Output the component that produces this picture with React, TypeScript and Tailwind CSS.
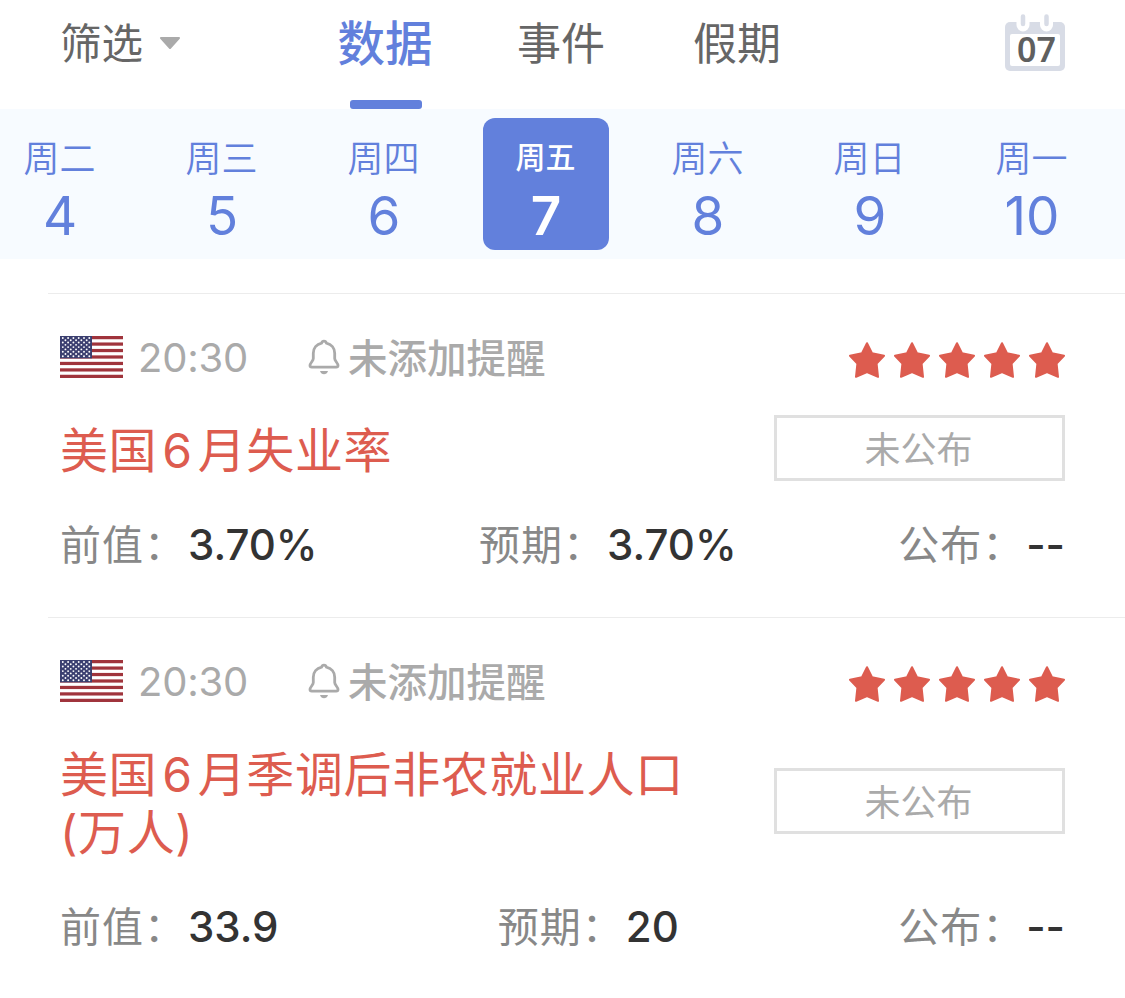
import { clsx } from "clsx";

interface Day {
  week: string;
  date: number;
}

interface Indicator {
  id: string;
  time: string;
  title: string;
  previous: string;
  forecast: string;
  actual: string;
}

const tabs = ["数据", "事件", "假期"];

const days: Day[] = [
  { week: "周二", date: 4 },
  { week: "周三", date: 5 },
  { week: "周四", date: 6 },
  { week: "周五", date: 7 },
  { week: "周六", date: 8 },
  { week: "周日", date: 9 },
  { week: "周一", date: 10 },
];

const indicators: Indicator[] = [
  {
    id: "unemployment",
    time: "20:30",
    title: "美国 6 月失业率",
    previous: "3.70%",
    forecast: "3.70%",
    actual: "--",
  },
  {
    id: "nonfarm",
    time: "20:30",
    title: "美国 6 月季调后非农就业人口(万人)",
    previous: "33.9",
    forecast: "20",
    actual: "--",
  },
];

const CalendarIcon = () => (
  <svg className="h-[58px] w-[60px]" viewBox="0 0 60 58">
    <rect y="8" width="60" height="49" rx="5" fill="#d8dce6" />
    <rect x="5" y="20" width="50" height="32" rx="2" fill="#fff" />
    <path d="M18 4V11M41.500 4V11" stroke="#fff" strokeWidth="13" strokeLinecap="round" />
    <path d="M18 2.500V10M41.500 2.500V10" stroke="#d8dce6" strokeWidth="4.500" strokeLinecap="round" />
    <text
      x="31.500"
      y="48"
      textAnchor="middle"
      className="font-['Noto_Sans','Noto_Sans_CJK_SC',sans-serif] text-[34px] font-semibold"
      fill="#5f5f5f"
    >
      07
    </text>
  </svg>
);

const FlagUS = () => (
  <svg className="h-[42px] w-[63px]" viewBox="0 0 63 42">
    <rect width="63" height="42" fill="#fff" />
    {[0, 1, 2, 3, 4, 5, 6].map((i) => (
      <rect key={i} y={i * 6.46} width="63" height="3.23" fill="#a0343c" />
    ))}
    <rect width="32" height="22.300" fill="#3b3f70" />
    {[0, 1, 2, 3, 4, 5, 6, 7, 8].map((row) =>
      Array.from({ length: row % 2 ? 5 : 6 }, (_, col) => (
        <circle
          key={`${row}-${col}`}
          cx={2.800 + col * 5.300 + (row % 2 ? 2.650 : 0)}
          cy={2 + row * 2.280}
          r="0.950"
          fill="#fff"
        />
      ))
    )}
  </svg>
);

const BellIcon = () => (
  <svg className="h-[36px] w-[32px]" viewBox="0 0 32 36" fill="none">
    <path
      d="M16 2.200C14.800 2.200 13.900 3 13.600 4.100C8.600 5.200 5.300 9.100 5.300 14.200V19.500C5.300 22 2 24 2 26.500C2 27.700 2.700 28.100 3.800 28.100H28.200C29.300 28.100 30 27.700 30 26.500C30 24 26.700 22 26.700 19.500V14.200C26.700 9.100 23.400 5.200 18.400 4.100C18.100 3 17.200 2.200 16 2.200Z"
      stroke="#aaa"
      strokeWidth="2.800"
      strokeLinejoin="round"
    />
    <path d="M12 32H20C19.300 34.200 17.800 35.300 16 35.300C14.200 35.300 12.700 34.200 12 32Z" fill="#aaa" />
  </svg>
);

const StarIcon = () => (
  <svg className="size-9" viewBox="0 0 36 36">
    <path
      d="M18 1.200L23 11.300L35 13.800L27.600 21.500L29 34.800L18 30L7 34.800L8.400 21.500L1 13.800L13 11.300Z"
      fill="#dd5c4f"
      stroke="#dd5c4f"
      strokeWidth="2"
      strokeLinejoin="round"
    />
  </svg>
);

const Header = () => (
  <header className="flex h-[109px] items-start pl-[60px] pr-[60px]">
    <button className="flex h-[86px] w-[277px] items-center text-[41.500px] text-[#666]">
      <span className="pt-[3px]">筛选</span>
      <svg className="ml-4 h-3 w-[22px]" viewBox="0 0 22 12">
        <path d="M2 1H20L11 11Z" fill="#aaa" stroke="#aaa" strokeWidth="2" strokeLinejoin="round" />
      </svg>
    </button>
    <nav className="flex flex-1">
      {tabs.map((tab, index) => (
        <button
          key={tab}
          className={clsx(
            "flex h-[109px] flex-col items-center",
            index === 0 ? "w-24 text-[47.500px] font-medium text-[#6280dc]" : "text-[44px] text-[#666]",
            index === 1 && "ml-[84px]",
            index === 2 && "ml-[88px]"
          )}
        >
          <span className="h-[88px] leading-[88px]">{tab}</span>
          {index === 0 && <span className="ml-0.5 mt-3 h-[9px] w-[72px] rounded-[3px] bg-[#6280dc]" />}
        </button>
      ))}
    </nav>
    <div className="pt-[14px]">
      <CalendarIcon />
    </div>
  </header>
);

const WeekStrip = () => (
  <div className="h-[150px] overflow-hidden bg-[#f7fbff] pt-[9px]">
    <div className="-ml-[21px] flex w-[1134px]">
      {days.map(({ week, date }) => {
        const active = date === 7;
        return (
          <div key={date} className="flex w-[162px] justify-center">
            <div
              className={clsx(
                "flex h-[132px] w-[126px] flex-col items-center rounded-xl",
                active ? "bg-[#6280dc] font-medium text-white" : "text-[#6280dc]"
              )}
            >
              <span
                className={clsx(
                  "h-[80px] pr-px",
                  active ? "text-[30px] leading-[78px]" : "text-[36px] font-[350] leading-[82px]"
                )}
              >
                {week}
              </span>
              <span className={clsx("-mt-[9px] text-[53px] leading-[54px]", active && "font-semibold")}>{date}</span>
            </div>
          </div>
        );
      })}
    </div>
  </div>
);

const Field = ({ label, value }: { label: string; value: string }) => (
  <div className="flex items-center whitespace-nowrap">
    <span className="pt-[4px] text-[41px] tracking-[1px] text-[#888]">{label}：</span>
    <span className="ml-0.5 text-[42px] font-medium text-[#333]">{value}</span>
  </div>
);

const IndicatorCard = ({ item }: { item: Indicator }) => (
  <section className="ml-12 border-t border-[#ececec] pb-[52px] pl-3 pr-[60px] pt-[42px]">
    <div className="flex h-[42px] items-center text-[#aaa]">
      <FlagUS />
      <span className="ml-[15px] w-[170px] pt-[2px] text-[40px] tracking-[-0.2px]">{item.time}</span>
      <BellIcon />
      <span className="ml-2 pt-[5px] text-[39.500px] font-medium">未添加提醒</span>
      <div className="ml-auto flex gap-[9px] pt-[6px]">
        {[1, 2, 3, 4, 5].map((star) => (
          <StarIcon key={star} />
        ))}
      </div>
    </div>

    <div className="mt-[41px] flex items-center justify-between">
      <h2 className="-mb-[3px] w-[660px] pt-[3px] text-[48px] leading-[58px] tracking-[0.6px] text-[#dd5c4f] [word-spacing:-9px]">
        {item.title}
      </h2>
      <div className="-my-1 flex h-[66px] w-[291px] items-center justify-center border-3 border-[#e0e0e0] pr-0.5 pt-[4px] text-[36px] text-[#aaa]">
        未公布
      </div>
    </div>

    <div className="mt-[46px] flex h-[42px] items-center justify-between">
      <Field label="前值" value={item.previous} />
      <Field label="预期" value={item.forecast} />
      <Field label="公布" value={item.actual} />
    </div>
  </section>
);

const App = () => {
  return (
    <div className="h-[998px] w-[1125px] overflow-hidden bg-white font-['Inter','Noto_Sans_CJK_SC',sans-serif]">
      <Header />
      <WeekStrip />
      <main className="pt-[34px]">
        {indicators.map((item) => (
          <IndicatorCard key={item.id} item={item} />
        ))}
      </main>
    </div>
  );
};

export default App;
